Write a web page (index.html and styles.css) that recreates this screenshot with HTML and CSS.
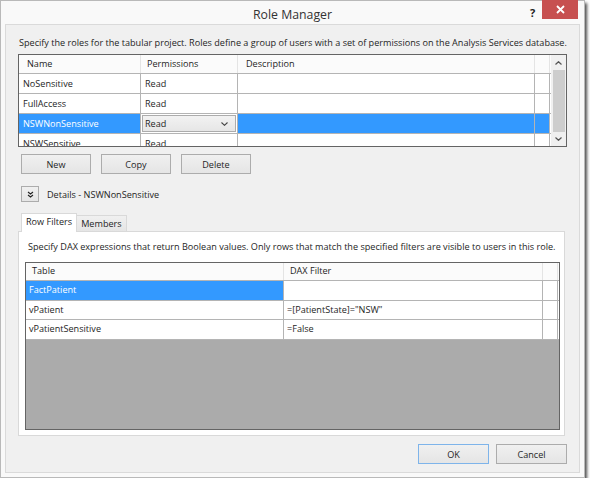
FILE: index.html
```html
<!DOCTYPE html>
<html lang="en">
<head>
    <meta charset="UTF-8">
    <title>Role Manager</title>
    <link rel="stylesheet" href="styles.css">
</head>
<body>
<div class="window">
    <div class="titlebar">
        <span class="title">Role Manager</span>
        <span class="help">?</span>
        <span class="close">
            <svg width="9" height="9" viewBox="0 0 9 9"><path d="M1 1 L8 8 M8 1 L1 8" stroke="#fff" stroke-width="1.8"/></svg>
        </span>
    </div>

    <div class="client">
        <p class="intro">Specify the roles for the tabular project. Roles define a group of users with a set of permissions on the Analysis Services database.</p>

        <div class="roles">
            <div class="grid">
                <div class="row head">
                    <div class="cell">Name</div>
                    <div class="cell">Permissions</div>
                    <div class="cell">Description</div>
                    <div class="cell"></div>
                </div>
                <div class="row">
                    <div class="cell">NoSensitive</div>
                    <div class="cell">Read</div>
                    <div class="cell"></div>
                    <div class="cell"></div>
                </div>
                <div class="row">
                    <div class="cell">FullAccess</div>
                    <div class="cell">Read</div>
                    <div class="cell"></div>
                    <div class="cell"></div>
                </div>
                <div class="row selected">
                    <div class="cell">NSWNonSensitive</div>
                    <div class="cell combo-cell">
                        <div class="combo">
                            <span>Read</span>
                            <svg width="7" height="4" viewBox="0 0 7 4"><polyline points="0.5,0.5 3.5,3.3 6.5,0.5" fill="none" stroke="#444" stroke-width="1.1"/></svg>
                        </div>
                    </div>
                    <div class="cell"></div>
                    <div class="cell"></div>
                </div>
                <div class="row">
                    <div class="cell">NSWSensitive</div>
                    <div class="cell">Read</div>
                    <div class="cell"></div>
                    <div class="cell"></div>
                </div>
            </div>
            <div class="scrollbar">
                <svg width="7" height="4" viewBox="0 0 7 4"><polyline points="0.5,3.5 3.5,0.7 6.5,3.5" fill="none" stroke="#555" stroke-width="1.2"/></svg>
                <div class="thumb"></div>
                <svg width="7" height="4" viewBox="0 0 7 4"><polyline points="0.5,0.5 3.5,3.3 6.5,0.5" fill="none" stroke="#555" stroke-width="1.2"/></svg>
            </div>
        </div>

        <div class="role-buttons">
            <button class="btn">New</button>
            <button class="btn">Copy</button>
            <button class="btn">Delete</button>
        </div>

        <div class="details">
            <button class="expand">
                <svg width="7" height="7" viewBox="0 0 7 7"><polyline points="1,1 3.5,3 6,1" fill="none" stroke="#222" stroke-width="1.1"/><polyline points="1,4 3.5,6 6,4" fill="none" stroke="#222" stroke-width="1.1"/></svg>
            </button>
            <span>Details - NSWNonSensitive</span>
        </div>

        <div class="tabs">
            <div class="tab active">Row Filters</div>
            <div class="tab">Members</div>
        </div>
        <div class="tab-panel">
            <p class="hint">Specify DAX expressions that return Boolean values. Only rows that match the specified filters are visible to users in this role.</p>
            <div class="filters">
                <div class="frow head">
                    <div class="cell">Table</div>
                    <div class="cell">DAX Filter</div>
                    <div class="cell"></div>
                </div>
                <div class="frow">
                    <div class="cell picked">FactPatient</div>
                    <div class="cell"></div>
                    <div class="cell"></div>
                </div>
                <div class="frow">
                    <div class="cell">vPatient</div>
                    <div class="cell">=[PatientState]="NSW"</div>
                    <div class="cell"></div>
                </div>
                <div class="frow">
                    <div class="cell">vPatientSensitive</div>
                    <div class="cell">=False</div>
                    <div class="cell"></div>
                </div>
            </div>
        </div>

        <div class="dialog-buttons">
            <button class="btn default">OK</button>
            <button class="btn">Cancel</button>
        </div>
    </div>
</div>
</body>
</html>
```

FILE: styles.css
```css
body {
  margin:0;
  background:#fff;
  font-family:"Segoe UI","Open Sans",sans-serif;
  font-size:9.1px;
  color:#1e1e1e;
}
.window {
  width:585px;
  height:478px;
  box-sizing:border-box;
  border:1px solid #b9b9b9;
  background:#f9f9f9;
  box-shadow:2px 3px 3px rgba(0,0,0,0.7);
  display:flex;
  flex-direction:column;
}
.titlebar {
  position:relative;
  height:23px;
  flex:none;
  display:flex;
  align-items:center;
  justify-content:center;
}
.titlebar .title {
  font-size:12.3px;
  color:#333;
  margin-top:3px;
}
.titlebar .help {
  position:absolute;
  left:529px;
  top:4px;
  font-size:11px;
  font-weight:700;
  color:#222;
}
.titlebar .close {
  position:absolute;
  right:6px;
  top:-1px;
  width:36px;
  height:19px;
  background:#c75050;
  display:flex;
  align-items:center;
  justify-content:center;
}
.client {
  flex:1;
  margin:0 4px 4px 4px;
  border:1px solid #dadada;
  background:#f0f0f0;
  padding:0 12px 8px 12px;
  display:flex;
  flex-direction:column;
}
.intro {
  margin:11px 0 0 1px;
  line-height:13px;
  white-space:nowrap;
}

/* roles grid */
.roles {
  margin-top:5px;
  height:93px;
  box-sizing:border-box;
  border:1px solid #646464;
  background:#fff;
  display:flex;
  overflow:hidden;
}
.roles .grid {
  flex:1;
  overflow:hidden;
}
.row {
  display:grid;
  grid-template-columns:122px 97px 297px 15px;
  height:20px;
  box-sizing:border-box;
  border-bottom:1px solid #b4b4b4;
}
.row .cell {
  border-right:1px solid #b4b4b4;
  padding-left:4px;
  line-height:19px;
  white-space:nowrap;
  overflow:hidden;
}
.row.head {
  height:19px;
  background:#fbfbfb;
}
.row.head .cell {
  border-right-color:#e4e4e4;
  padding-left:8px;
  line-height:18px;
}
.row.head .cell:nth-child(2) {
  padding-left:6px;
}
.row.selected .cell {
  background:#3399ff;
  color:#fff;
}
.row.selected .combo-cell {
  background:#fff;
  padding:1px;
}
.combo {
  height:17px;
  box-sizing:border-box;
  border:1px solid #acacac;
  background:linear-gradient(#f2f2f2,#e6e6e6);
  color:#1e1e1e;
  display:flex;
  align-items:center;
  justify-content:space-between;
  padding:0 7px 0 2px;
  line-height:15px;
}
.scrollbar {
  width:15px;
  flex:none;
  background:#f0f0f0;
  display:flex;
  flex-direction:column;
  align-items:center;
  padding:6px 0 5px;
  box-sizing:border-box;
}
.scrollbar .thumb {
  width:12px;
  flex:1;
  margin:5px 0;
  background:#cdcdcd;
}

/* buttons */
.btn {
  font-family:inherit;
  font-size:inherit;
  color:#1e1e1e;
  width:70px;
  height:20px;
  padding:0;
  border:1px solid #acacac;
  background:linear-gradient(#f0f0f0,#e5e5e5);
}
.btn.default {
  border-color:#7eb4ea;
}
.role-buttons {
  display:flex;
  gap:10px;
  margin:7px 0 0 3px;
}
.details {
  display:flex;
  align-items:center;
  margin:12px 0 0 3px;
  gap:8px;
}
.expand {
  width:18px;
  height:16px;
  padding:0;
  border:1px solid #acacac;
  background:linear-gradient(#f0f0f0,#e5e5e5);
  display:flex;
  align-items:center;
  justify-content:center;
}

/* tabs */
.tabs {
  display:flex;
  align-items:flex-end;
  height:18px;
  margin-top:11px;
  padding-left:3px;
}
.tab {
  height:16px;
  box-sizing:border-box;
  border:1px solid #d9d9d9;
  border-bottom:none;
  border-left:none;
  background:linear-gradient(#f0f0f0,#e5e5e5);
  padding:0 4px;
  line-height:16px;
  white-space:nowrap;
}
.tab.active {
  height:19px;
  border-left:1px solid #d9d9d9;
  background:#fff;
  position:relative;
  z-index:1;
  margin-bottom:-1px;
  line-height:16px;
  padding:0 4px;
}
.tab-panel {
  height:205px;
  box-sizing:border-box;
  margin-right:2px;
  border:1px solid #d9d9d9;
  background:#fff;
  padding:0 4px 5px 6px;
  display:flex;
  flex-direction:column;
}
.hint {
  margin:8px 0 0 3px;
  line-height:13px;
  white-space:nowrap;
}

/* filter grid */
.filters {
  flex:1;
  margin-top:9px;
  border:1px solid #646464;
  background:#ababab;
}
.frow {
  display:grid;
  grid-template-columns:258px 259px 15px;
  height:19.5px;
  box-sizing:border-box;
  border-bottom:1px solid #b4b4b4;
  background:#fff;
}
.frow .cell {
  border-right:1px solid #b4b4b4;
  padding-left:3px;
  line-height:18px;
  white-space:nowrap;
}
.frow.head {
  height:18px;
  background:#fbfbfb;
}
.frow.head .cell {
  border-right-color:#e4e4e4;
  padding-left:6px;
  line-height:16px;
}
.frow .cell.picked {
  background:#3399ff;
  color:#fff;
}

.dialog-buttons {
  display:flex;
  justify-content:flex-end;
  gap:7px;
  margin-top:auto;
}
.dialog-buttons .btn {
  width:71px;
}
```
